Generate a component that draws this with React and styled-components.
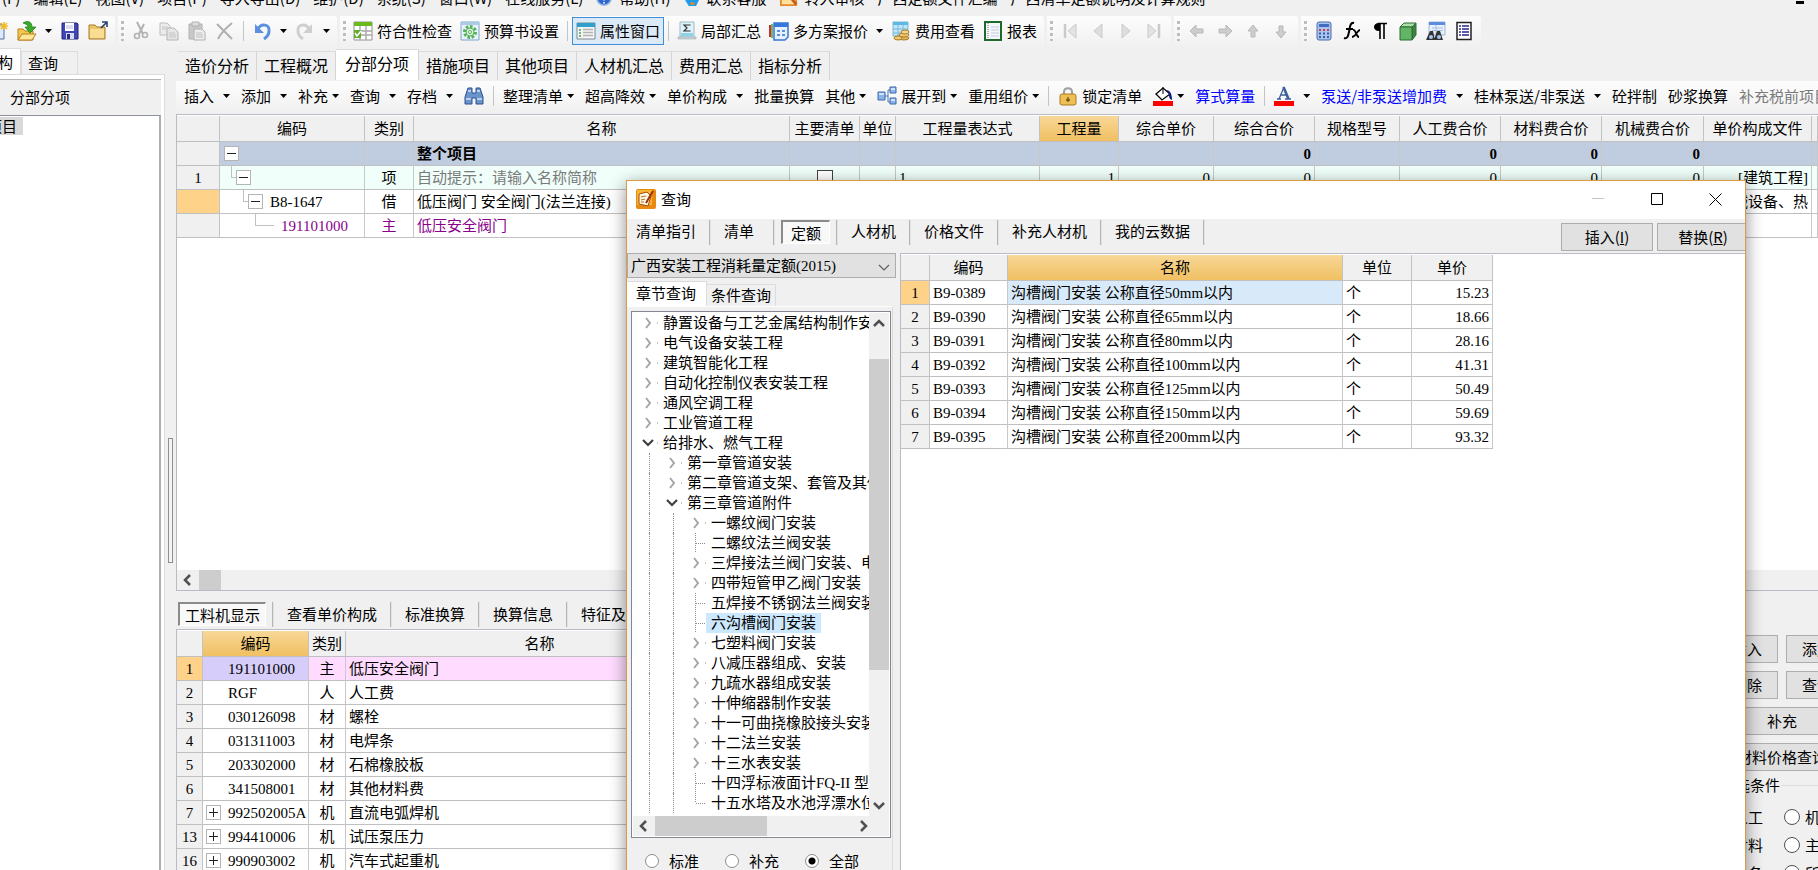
import React, { useState } from 'react';
import styled, { createGlobalStyle, css } from 'styled-components';

const GlobalStyle = createGlobalStyle`
  * {
    box-sizing: border-box;
  }

  body {
    margin: 0;
    overflow: hidden;
    background: #f0f0f0;
    color: #000;
    font-family: 'Noto Sans CJK SC', sans-serif;
    font-size: 15px;
    line-height: 20px;
  }

  button, select, input {
    font: inherit;
    color: inherit;
    margin: 0;
    padding: 0;
    border: 0;
    background: none;
    white-space: nowrap;
  }

  a {
    color: inherit;
    text-decoration: none;
  }
`;

const gridFont = css`
  font-family: 'Liberation Serif', 'Noto Sans CJK SC', serif;
`;

const Window = styled.div`
  position: relative;
  height: 100vh;
  display: flex;
  flex-direction: column;
  overflow: hidden;
`;

const MenuBar = styled.nav`
  display: flex;
  flex: none;
  align-items: flex-end;
  gap: 13px;
  height: 16px;
  padding-bottom: 8px;
  margin-left: -28px;
  white-space: nowrap;
`;

const MenuLink = styled.a`
  display: flex;
  align-items: center;
  gap: 7px;
`;

const MinimizeChild = styled.button`
  width: 8px;
  height: 3px;
  margin: 0 14px 4px auto;
  background: #000;
`;

const ToolBars = styled.div`
  display: flex;
  flex: none;
  gap: 3px;
  height: 32px;
  margin-left: -18px;
`;

const ToolGroup = styled.div`
  display: flex;
  align-items: center;
  padding: 0 3px 2px;
  background: linear-gradient(#fdfdfd, #f0f0f0);
  border-radius: 0 3px 3px 0;
`;

const Grip = styled.span`
  width: 4px;
  height: 20px;
  margin-right: 2px;
  background: repeating-linear-gradient(#bdbdbd 0 3px, transparent 3px 6px);
  border-right: 1px solid #fbfbfb;
`;

const Separator = styled.span`
  flex: none;
  width: 1px;
  height: 20px;
  margin: 0 4px;
  background: #c4c4c4;
`;

const IconButton = styled.button`
  display: flex;
  align-items: center;
  justify-content: center;
  width: 28px;
  height: 28px;
`;

const DropButton = styled.button`
  display: flex;
  align-items: center;
  justify-content: center;
  width: 15px;
  height: 28px;
`;

const LabelButton = styled.button`
  display: flex;
  align-items: center;
  gap: 4px;
  height: 28px;
  padding: 0 3px;
  border: 1px solid ${({ $on }) => ($on ? '#3c8fd9' : 'transparent')};
  background: ${({ $on }) => ($on ? '#dceaf7' : 'transparent')};
`;

const Workspace = styled.div`
  display: flex;
  flex: 1;
  min-height: 0;
`;

const LeftPane = styled.aside`
  display: flex;
  flex: 0 0 220px;
  flex-direction: column;
  margin-left: -55px;
`;

const LeftTabs = styled.div`
  display: flex;
  align-items: flex-end;
  height: 26px;
`;

const LeftTab = styled.button`
  height: ${({ $on }) => ($on ? 26 : 23)}px;
  padding: ${({ $on }) => ($on ? '0 7px' : '0 19px 0 6px')};
  background: ${({ $on }) => ($on ? '#fff' : '#f0f0f0')};
  border: 1px solid #dcdcdc;
  border-bottom: 0;
`;

const LeftPage = styled.div`
  display: flex;
  flex: 1;
  flex-direction: column;
  padding: 4px 3px 0 0;
  background: #fff;
  border-top: 1px solid #dcdcdc;
  border-right: 1px solid #dcdcdc;
`;

const LeftHeading = styled.div`
  height: 36px;
  padding: 7px 0 0 65px;
  background: #f0f0f0;
  border-top: 1px solid #b4b4b4;
`;

const ProjectTree = styled.div`
  flex: 1;
  padding-left: 8px;
  border-top: 1px solid #8c919c;
  border-right: 2px solid #a9afb9;
`;

const ProjectNode = styled.button`
  height: 18px;
  padding: 0 6px 0 4px;
  margin-top: 1px;
  line-height: 18px;
  background: #d9d9d9;
`;

const Divider = styled.div`
  display: flex;
  flex: 0 0 11px;
  justify-content: center;
  align-items: center;
`;

const DividerHandle = styled.span`
  width: 5px;
  height: 125px;
  margin-top: 82px;
  background: #f4f4f4;
  border: 1px solid #8f8f8f;
`;

const Main = styled.main`
  display: flex;
  flex: 1;
  flex-direction: column;
  min-width: 0;
`;

const MainTabs = styled.div`
  display: flex;
  align-items: flex-end;
  height: 33px;
  padding: 0 0 1px 2px;
`;

const MainTab = styled.button`
  height: ${({ $on }) => ($on ? 31 : 29)}px;
  padding: ${({ $on }) => ($on ? '0 9px 5px' : '0 7px 2px')};
  font-size: 16px;
  background: ${({ $on }) => ($on ? '#fff' : '#f0f0f0')};
  border-top: 1px solid #dcdcdc;
  border-right: 1px solid #d4d4d4;
`;

const ActionBar = styled.div`
  display: flex;
  flex: none;
  align-items: center;
  gap: 11px;
  height: 32px;
  padding: 0 0 2px 8px;
  margin-bottom: 1px;
  overflow: hidden;
  background: linear-gradient(#fdfdfd, #f0f0f0);

  ${Separator} {
    margin: 0 -2px;
  }
`;

const Action = styled.button`
  display: flex;
  flex: none;
  align-items: center;
  gap: 4px;
  color: ${({ $color }) => $color || '#000'};
`;

const Caret = styled.span`
  width: 7px;
  height: 4px;
  margin-left: ${({ $wide }) => ($wide ? 5 : 0)}px;
  background: #000;
  clip-path: polygon(0 0, 100% 0, 50% 100%);
`;

const GridFrame = styled.section`
  display: flex;
  flex: 1;
  flex-direction: column;
  min-width: 0;
  min-height: 0;
  overflow: hidden;
  background: #fff;
  border: 1px solid #b9bbc6;
  border-width: ${({ $open }) => ($open ? '1px 0 0 1px' : '1px 0 1px 1px')};
  padding-top: 1px;
`;

const Grid = styled.table`
  ${gridFont}
  width: ${({ $width }) => $width || '100%'};
  table-layout: fixed;
  border-collapse: separate;
  border-spacing: 0;
`;

const Th = styled.th`
  height: 26px;
  padding: 0;
  font-weight: 400;
  white-space: nowrap;
  overflow: hidden;
  background: ${({ $hot }) => ($hot ? 'linear-gradient(#f8d797, #f0c062)' : '#f0f0f0')};
  border-right: 1px solid #c3c3c3;
  border-bottom: 1px solid #c0c0c0;
`;

const Td = styled.td`
  height: 24px;
  padding: 0 3px;
  text-align: ${({ $align }) => $align || 'left'};
  white-space: nowrap;
  overflow: hidden;
  background: ${({ $bg }) => $bg || 'transparent'};
  color: ${({ $color }) => $color || 'inherit'};
  border-right: 1px solid #c8c8c8;
  border-bottom: 1px solid #c0c0c0;
`;

const RowHead = styled(Th)`
  height: 24px;
  background: ${({ $current }) => ($current ? '#ffd28a' : '#f0f0f0')};
`;

const Tr = styled.tr`
  background: ${({ $bg }) => $bg || '#fff'};
  color: ${({ $color }) => $color || '#000'};
  font-weight: ${({ $bold }) => ($bold ? 700 : 400)};
`;

const CodeCell = styled.div`
  display: flex;
  align-items: center;
  height: 23px;
  padding-left: ${({ $indent }) => $indent}px;
`;

const Connector = styled.span`
  flex: none;
  align-self: flex-start;
  width: ${({ $leaf }) => ($leaf ? 19 : 5)}px;
  height: 12px;
  border: 1px solid #c0c0c0;
  border-width: 0 0 1px 1px;
`;

const Toggle = styled.button`
  display: flex;
  flex: none;
  align-items: center;
  justify-content: center;
  width: 15px;
  height: 15px;
  background: #fff;
  border: 1px solid #b4b4b4;
`;

const ToggleSlot = styled.span`
  flex: none;
  width: 15px;
  height: 15px;
`;

const CodeText = styled.span`
  padding-left: 7px;
`;

const ListTick = styled.input`
  display: block;
  appearance: none;
  width: 16px;
  height: 16px;
  margin: 0 auto;
  background: #fff;
  border: 1px solid #404040;
`;

const ScrollTrack = styled.div`
  display: flex;
  flex: none;
  align-items: center;
  flex-direction: ${({ $vertical }) => ($vertical ? 'column' : 'row')};
  ${({ $vertical }) => ($vertical ? 'width: 20px;' : 'height: 20px;')}
  background: #f0f0f0;
`;

const ScrollButton = styled.button`
  display: flex;
  flex: none;
  align-items: center;
  justify-content: center;
  width: 22px;
  height: 22px;
`;

const ScrollThumb = styled.span`
  flex: ${({ $size }) => $size};
  align-self: stretch;
  background: #cdcdcd;
`;

const ScrollSpace = styled.span`
  flex: ${({ $size }) => $size};
`;

const BottomArea = styled.div`
  display: flex;
  flex: 0 0 279px;
  gap: 6px;
  min-height: 0;
`;

const DetailPane = styled.div`
  display: flex;
  flex: 1;
  flex-direction: column;
  min-width: 0;
`;

const SegmentTabs = styled.div`
  display: flex;
  align-items: center;
  height: 26px;
`;

const DetailTabs = styled(SegmentTabs)`
  flex: none;
  margin: 10px 0 2px 2px;
`;

const SegmentTab = styled.button`
  height: 26px;
  padding: 0 13px;
`;

const SegmentTabOn = styled.button`
  height: 24px;
  padding: 0 5px;
  background: #f8f8f8;
  border: 1px solid #fff;
  border-top: 2px solid #8a8a8a;
  border-left: 2px solid #8a8a8a;
`;

const DialogTabOn = styled(SegmentTabOn)`
  padding: 0 8px;
  margin-left: 6px;
`;

const SegmentLine = styled.span`
  width: 2px;
  height: 25px;
  margin-left: ${({ $gap }) => $gap || 0}px;
  background: #b4b4b4;
  border-right: 1px solid #e2e2e2;
`;

const SidePanel = styled.div`
  flex: none;
  width: 136px;
  margin-right: -30px;
  padding-top: 44px;
`;

const ButtonGrid = styled.div`
  display: grid;
  grid-template-columns: 1fr 1fr;
  gap: 8px;
  padding: 0 0 0 4px;
`;

const PushButton = styled.button`
  height: 28px;
  grid-column: ${({ $full }) => ($full ? '1 / -1' : 'auto')};
  background: #e1e1e1;
  border: 1px solid #adadad;
`;

const FilterBox = styled.fieldset`
  display: grid;
  grid-template-columns: 72px 64px;
  row-gap: 8px;
  margin: 4px 0 0;
  padding: 12px 0 0;
  border: 1px solid #dcdcdc;
  border-left: 0;

  legend {
    margin-left: 6px;
    padding: 0 2px;
  }
`;

const RadioLabel = styled.label`
  display: flex;
  align-items: center;
  gap: 5px;
  white-space: nowrap;
`;

const Radio = styled.input`
  appearance: none;
  width: 16px;
  height: 16px;
  background: #fff;
  border: 1px solid #505050;
  border-radius: 50%;

  &:checked {
    background: radial-gradient(#000 0 3px, #fff 4px);
  }
`;

const Dialog = styled.div`
  position: absolute;
  top: 180px;
  right: 72px;
  bottom: 0;
  left: 626px;
  display: flex;
  flex-direction: column;
  overflow: hidden;
  background: #f0f0f0;
  border: 1px solid #dc9a45;
  border-bottom: 0;
`;

const DialogShadow = styled.div`
  position: absolute;
  top: 180px;
  right: 72px;
  bottom: -20px;
  left: 626px;
  box-shadow: 0 4px 16px rgba(0, 0, 0, 0.45);
`;

const TitleBar = styled.header`
  display: flex;
  flex: none;
  align-items: center;
  gap: 5px;
  height: 38px;
  padding: 0 0 2px 9px;
  background: #fff;
`;

const WindowButtons = styled.div`
  display: flex;
  margin-left: auto;
`;

const WindowButton = styled.button`
  display: flex;
  align-items: center;
  justify-content: center;
  width: 59px;
  height: 36px;
`;

const DialogBar = styled.div`
  display: flex;
  flex: none;
  justify-content: space-between;
  align-items: flex-start;
  height: 34px;

  ${SegmentTab} {
    padding-bottom: 2px;
  }

  ${SegmentTab}:first-child {
    padding-left: 9px;
  }
`;

const DialogActions = styled.div`
  display: flex;
  gap: 4px;
  margin: 4px -4px 0 0;

  ${PushButton} {
    width: 92px;
  }
`;

const DialogBody = styled.div`
  display: flex;
  flex: 1;
  gap: 4px;
  min-height: 0;
`;

const QueryPane = styled.div`
  display: flex;
  flex: 0 0 269px;
  flex-direction: column;
  min-width: 0;
`;

const SelectBox = styled.div`
  position: relative;
  height: 25px;

  svg {
    position: absolute;
    top: 8px;
    right: 6px;
    pointer-events: none;
  }
`;

const LibrarySelect = styled.select`
  ${gridFont}
  appearance: none;
  width: 100%;
  height: 25px;
  padding-left: 3px;
  background: #e1e1e1;
  border: 1px solid #adadad;
`;

const QueryTabs = styled.div`
  display: flex;
  align-items: flex-end;
  height: 28px;
`;

const QueryTab = styled.button`
  height: ${({ $on }) => ($on ? 25 : 22)}px;
  padding: ${({ $on }) => ($on ? '0 10px 2px 9px' : '0 4px 2px')};
  background: ${({ $on }) => ($on ? '#fff' : '#f0f0f0')};
  border: 1px solid #dcdcdc;
  border-bottom: 0;
  border-left: 0;
`;

const QueryPage = styled.div`
  display: flex;
  flex: 1;
  flex-direction: column;
  min-height: 0;
  margin-right: 3px;
  padding: 4px 1px 0 4px;
  border-top: 1px solid #fff;
  border-right: 1px solid #dcdcdc;
`;

const TreeFrame = styled.div`
  display: flex;
  flex: 1;
  flex-direction: column;
  min-height: 0;
  padding: 1px;
  background: #fff;
  border: 1px solid #828790;
`;

const TreeScroll = styled.div`
  display: flex;
  flex: 1;
  min-height: 0;
`;

const Tree = styled.ul`
  ${gridFont}
  flex: 1;
  min-width: 0;
  margin: 0;
  padding: 0 0 0 6px;
  overflow: hidden;
  list-style: none;
`;

const TreeRow = styled.li`
  display: flex;
  height: 20px;
  white-space: nowrap;
`;

const Guide = styled.span`
  flex: none;
  width: 14px;
  margin-left: 10px;
  border-left: 1px dotted #8c8c8c;
`;

const TreeLabel = styled.button`
  flex: none;
  padding: 0 5px;
  background: ${({ $selected }) => ($selected ? '#cce8ff' : 'transparent')};
`;

const TreeIcon = styled.svg`
  flex: none;
  width: 19px;
  height: 20px;
`;

const RadioRow = styled.div`
  display: flex;
  flex: none;
  height: 32px;
  padding: 14px 0 0 14px;

  ${RadioLabel} {
    width: 80px;
    gap: 10px;
  }

  ${Radio} {
    width: 14px;
    height: 14px;
    border-color: #8c8c8c;
  }
`;

const Svg = ({ size = 20, h, children }) => (
  <svg width={size} height={h || size} viewBox={`0 0 20 ${h ? (20 * h) / size : 20}`} fill="none" aria-hidden="true">
    {children}
  </svg>
);

const icons = {
  newDoc: (
    <Svg>
      <path d="M3 3h9l3 3v12H3z" fill="#dce9fb" stroke="#4f6da8" />
      <path d="M15 1v8M11 5h8M12 2l6 6M18 2l-6 6" stroke="#f2bd28" strokeWidth="1.5" />
    </Svg>
  ),
  open: (
    <Svg>
      <path d="M1 19V8h5l2 2h8v9z" fill="#f4c84c" stroke="#b5801a" />
      <path d="M1 19l4-6h14l-4 6z" fill="#ffe69a" stroke="#b5801a" />
      <path d="M6 2c5-3 9-1 9 4h4l-6 6-5-6h3c0-2-2-3-5-4z" fill="#3bab2c" stroke="#1d7a18" strokeWidth=".7" />
    </Svg>
  ),
  save: (
    <Svg>
      <path d="M2 2h15l1 1v15H2z" fill="#4146b5" stroke="#22257c" />
      <path d="M5 2h9v8H5z" fill="#fff" />
      <path d="M6 5h7M6 7h7" stroke="#b6b9de" />
      <path d="M6 12h8v6H6z" fill="#d8daf2" />
      <path d="M7 13h3v5H7z" fill="#2a2d88" />
    </Svg>
  ),
  folderUp: (
    <Svg>
      <path d="M1 18V4h6l2 2h8v12z" fill="#edc566" stroke="#a9782a" />
      <path d="M2 8h14v9H2z" fill="#f9dd93" />
      <path d="M13 7l5-5M14 1h5v5" stroke="#25406e" strokeWidth="1.600" />
    </Svg>
  ),
  cut: (
    <Svg>
      <path d="M6 1l6 12M13 3L8 13" stroke="#b2b2b2" strokeWidth="2" />
      <circle cx="6" cy="15" r="2.500" stroke="#b2b2b2" strokeWidth="1.600" />
      <circle cx="14" cy="14" r="2.500" stroke="#b2b2b2" strokeWidth="1.600" />
    </Svg>
  ),
  copy: (
    <Svg>
      <path d="M1 2h7l3 3v9H1z" fill="#ececec" stroke="#bcbcbc" />
      <path d="M8 7h7l4 4v8H8z" fill="#e6e6e6" stroke="#b4b4b4" />
      <path d="M3 6h5M3 8h4M10 12h6M10 14h7M10 16h7" stroke="#c4c4c4" />
    </Svg>
  ),
  paste: (
    <Svg>
      <path d="M2 3h13v15H2z" fill="#c9c9c9" stroke="#b0b0b0" />
      <path d="M5 1h7v4H5z" fill="#dedede" stroke="#b0b0b0" />
      <path d="M7 8h8l3 3v8H7z" fill="#ededed" stroke="#b0b0b0" />
      <path d="M9 12h6M9 14h7M9 16h7" stroke="#c0c0c0" />
    </Svg>
  ),
  remove: (
    <Svg>
      <path d="M2 3l15 15M17 2C11 7 6 12 3 18" stroke="#b0b0b0" strokeWidth="2" />
    </Svg>
  ),
  undo: (
    <Svg>
      <path d="M3 3v9h9z" fill="#5b8fe0" />
      <path d="M6 8c3-6 12-5 11 2 0 4-2 6-5 8" stroke="#5b8fe0" strokeWidth="3" />
    </Svg>
  ),
  redo: (
    <Svg>
      <path d="M17 3v9H8z" fill="#cfcfcf" />
      <path d="M14 8C11 2 2 3 3 10c0 4 2 6 5 8" stroke="#cfcfcf" strokeWidth="3" />
    </Svg>
  ),
  check: (
    <Svg>
      <path d="M1 1h18v18H1z" fill="#fff" stroke="#909090" />
      <path d="M1 1h18v4H1z" fill="#6cb91c" />
      <path d="M7 5v14M13 5v14M1 10h18M1 14h18" stroke="#a8a8a8" strokeWidth="1.400" />
      <path d="M1 9h7v8H1z" fill="#62ad2c" />
      <path d="M2 12l2 3 4-5" stroke="#fff" strokeWidth="1.500" />
    </Svg>
  ),
  gear: (
    <Svg>
      <path d="M1 1h18v18H1z" fill="#eaf3fb" stroke="#7fa6cc" />
      <path d="M1 1h18v3H1z" fill="#aecbe6" />
      <circle cx="10" cy="11" r="5.500" stroke="#57b05a" strokeWidth="3" strokeDasharray="2.6 1.6" />
      <circle cx="10" cy="11" r="4" fill="#d9f1d7" stroke="#57b05a" />
      <circle cx="10" cy="11" r="1.500" fill="#fff" stroke="#57b05a" />
    </Svg>
  ),
  props: (
    <Svg>
      <path d="M1 2h18v16H1z" fill="#f5f5f5" stroke="#7c8a94" />
      <path d="M1 2h18v4H1z" fill="#2fa0cb" />
      <path d="M4 8v9" stroke="#68b878" strokeWidth="2" strokeDasharray="2 1" />
      <path d="M7 8.500h10M7 11.500h10M7 14.500h10" stroke="#b3b3b3" strokeWidth="1.500" />
    </Svg>
  ),
  sigma: (
    <Svg>
      <path d="M3 1h14v15H3z" fill="#dff3fa" stroke="#9db9c4" />
      <path d="M13 4.500V4H7l3 3-3 3h6v-.5" stroke="#333" strokeWidth="1.200" />
      <path d="M4 12h12v3H4z" fill="#8ed2e8" />
      <path d="M1 16h18v2H1z" fill="#c9d5d9" stroke="#90a0a8" strokeWidth=".5" />
    </Svg>
  ),
  plans: (
    <Svg>
      <path d="M1 4v12" stroke="#d92b2b" strokeWidth="2" />
      <path d="M3 3v14" stroke="#39a839" strokeWidth="1.500" />
      <path d="M5 2h14v14l-3 3H5z" fill="#e7f0ff" stroke="#3777d8" strokeWidth="1.500" />
      <path d="M5 2h14v4H5z" fill="#3777d8" />
      <path d="M8 10h3M13 10h3M8 14h3M13 14h3" stroke="#5b8fe0" strokeWidth="2" />
    </Svg>
  ),
  coins: (
    <Svg>
      <path d="M2 1h15v14H2z" fill="#bfe5f7" stroke="#7ab8d8" />
      <path d="M2 1h15v3H2z" fill="#5db9e4" />
      <path d="M7 4v11M12 4v11M2 8h15M2 12h15" stroke="#7ab8d8" />
      <ellipse cx="13" cy="17" rx="5" ry="2" fill="#e2b357" stroke="#a87b28" />
      <ellipse cx="13" cy="14" rx="5" ry="2" fill="#efc871" stroke="#a87b28" />
      <ellipse cx="7" cy="17" rx="4" ry="2" fill="#efc871" stroke="#a87b28" />
      <ellipse cx="14" cy="11" rx="4" ry="2" fill="#f5d88e" stroke="#a87b28" />
    </Svg>
  ),
  report: (
    <Svg>
      <path d="M2 1h16v18H2z" fill="#f4f7fb" stroke="#1f6a2b" strokeWidth="2" />
      <path d="M5 2v16" stroke="#777" strokeDasharray="1 1" />
      <path d="M8 6h8M8 9h8M8 12h8M8 15h8" stroke="#c3cbd8" />
    </Svg>
  ),
  first: (
    <Svg>
      <path d="M5 3v14" stroke="#cacaca" strokeWidth="2.500" />
      <path d="M16 3v14l-8-7z" fill="#e3e3e3" stroke="#cacaca" />
    </Svg>
  ),
  prev: (
    <Svg>
      <path d="M14 3v14l-8-7z" fill="#dedede" stroke="#cacaca" />
    </Svg>
  ),
  next: (
    <Svg>
      <path d="M6 3v14l8-7z" fill="#dedede" stroke="#cacaca" />
    </Svg>
  ),
  last: (
    <Svg>
      <path d="M15 3v14" stroke="#cacaca" strokeWidth="2.500" />
      <path d="M4 3v14l8-7z" fill="#e3e3e3" stroke="#cacaca" />
    </Svg>
  ),
  left: (
    <Svg>
      <path d="M3 10l6-6v4h7v4H9v4z" fill="#cdcdcd" stroke="#b9b9b9" />
    </Svg>
  ),
  right: (
    <Svg>
      <path d="M17 10l-6-6v4H4v4h7v4z" fill="#cdcdcd" stroke="#b9b9b9" />
    </Svg>
  ),
  up: (
    <Svg>
      <path d="M10 4l5 6h-3v6H8v-6H5z" fill="#cdcdcd" stroke="#b9b9b9" />
    </Svg>
  ),
  down: (
    <Svg>
      <path d="M10 17l5-6h-3V5H8v6H5z" fill="#cdcdcd" stroke="#b9b9b9" />
    </Svg>
  ),
  calc: (
    <Svg>
      <rect x="3" y="1" width="14" height="18" rx="2" fill="#a9c4ee" stroke="#4c6ca8" />
      <path d="M5 3h10v3H5z" fill="#3f6cc0" />
      <path d="M5 9h10" stroke="#c8404f" strokeWidth="2" strokeDasharray="2 2" />
      <path d="M5 12.500h10M5 16h10" stroke="#3c5ea8" strokeWidth="2" strokeDasharray="2 2" />
    </Svg>
  ),
  fx: (
    <Svg>
      <path d="M12 2C8 1 8 6 7 11s-2 7-5 6M4 8h7" stroke="#000" strokeWidth="2" />
      <path d="M11 9c3-1 3 7 6 7M18 9c-3 0-4 7-8 7" stroke="#000" strokeWidth="1.800" />
    </Svg>
  ),
  para: (
    <Svg>
      <path d="M10 2v16M14 2v16M8 2.500h9" stroke="#000" strokeWidth="1.600" />
      <path d="M10 2C2 1 2 11 10 10z" fill="#000" />
    </Svg>
  ),
  cube: (
    <Svg>
      <path d="M2 6l4-4h12l-4 4z" fill="#aadfa5" stroke="#2f6b33" />
      <path d="M14 6l4-4v12l-4 5z" fill="#3c8640" stroke="#2f6b33" />
      <path d="M2 6h12v13H2z" fill="#63b566" stroke="#2f6b33" />
    </Svg>
  ),
  find: (
    <Svg>
      <path d="M3 1h16v13H3z" fill="#e8f0fc" stroke="#9fb6dd" />
      <path d="M3 1h16v3H3z" fill="#5d8ede" />
      <path d="M6 7h11M6 9.500h11M10 4v9" stroke="#a9bfe5" />
      <path d="M4 10h3l2 9H0zM11 10h3l3 9H8z" fill="#333" />
      <circle cx="5" cy="16" r="2" fill="#a7c8f5" />
      <circle cx="13" cy="16" r="2" fill="#a7c8f5" />
    </Svg>
  ),
  list: (
    <Svg>
      <path d="M3 1.500h14v17H3z" fill="#fff" stroke="#222" strokeWidth="1.500" />
      <path d="M5 5h2M5 8h2M5 11h2M5 14h2M8 5h7M8 8h7M8 11h7M8 14h7" stroke="#2a2a8c" strokeWidth="1.500" />
    </Svg>
  ),
  binoculars: (
    <Svg>
      <path d="M4 2h4v5h4V2h4l3 9v7h-7v-6H8v6H1v-7z" fill="#6c94cc" stroke="#2c5191" />
      <path d="M4 5h3M13 5h3M2 13h5M13 13h5" stroke="#d4e3f8" strokeWidth="1.500" />
    </Svg>
  ),
  expand: (
    <Svg>
      <path d="M7 10h4M11 10V4h3M11 10v6h3" stroke="#4a76b8" />
      <path d="M1 6h7v8H1zM13 1h6v6h-6zM13 12h6v6h-6z" fill="#8db4ea" stroke="#3c68ab" />
      <path d="M2 8h5M14 3h4M14 14h4" stroke="#e5effc" strokeWidth="1.500" />
    </Svg>
  ),
  lock: (
    <Svg>
      <path d="M6 9V6c0-5 8-5 8 0v3" stroke="#9f9f9f" strokeWidth="2" />
      <rect x="2" y="8" width="16" height="11" rx="2" fill="#eebf55" stroke="#a97b25" />
      <path d="M10 11v5M8 14h4" stroke="#6e4e12" strokeWidth="1.300" />
    </Svg>
  ),
  paint: (
    <Svg>
      <path d="M3 8l7-6 7 6-8 6z" fill="#fff" stroke="#000" strokeWidth="1.300" />
      <path d="M10 8V1" stroke="#000" />
      <path d="M13 4c4 0 6 4 6 10-3-1-3-4-3-6z" fill="#101a80" />
      <path d="M0 15h20v5H0z" fill="#f00" />
    </Svg>
  ),
  fontColor: (
    <Svg>
      <path d="M5 13L10 1M7 9h6M3 13h4M11 13h6" stroke="#3c5f9a" strokeWidth="1.300" />
      <path d="M9.500 1l5 12" stroke="#3c5f9a" strokeWidth="2.600" />
      <path d="M0 15h20v5H0z" fill="#f00" />
    </Svg>
  ),
  help: (
    <Svg size={16}>
      <circle cx="10" cy="10" r="9" fill="#2f66c9" stroke="#9dbbe9" strokeWidth="2" />
      <path d="M7 8c0-4 6-4 6 0 0 2-3 2-3 5M10 15v2" stroke="#fff" strokeWidth="2" />
    </Svg>
  ),
  service: (
    <Svg size={16}>
      <path d="M3 1h14l2 11-4 8H6l-5-8z" fill="#1d9bea" />
      <path d="M8 17h5" stroke="#e9892a" strokeWidth="3" />
    </Svg>
  ),
  audit: (
    <Svg size={18}>
      <path d="M1 1h17v17H1z" fill="#ffe09a" stroke="#e58a2c" strokeWidth="2" />
      <path d="M8 5l10 12" stroke="#c75a1b" strokeWidth="3" />
    </Svg>
  ),
  app: (
    <Svg>
      <rect x="0" y="0" width="20" height="20" rx="2" fill="#e88a12" />
      <path d="M1 1h15v15H1z" fill="#f7b631" />
      <path d="M3 5l8-2 4 4-3 10-9-2z" fill="#fff8e0" stroke="#a3480c" />
      <path d="M5 8l5-1M5 11l4-1M5 13l3 0" stroke="#b96a2c" />
      <path d="M17 2l-7 12" stroke="#a3300c" strokeWidth="2" />
    </Svg>
  ),
};

const Chevron = ({ dir, color = '#505050', width = 2.5 }) => {
  const shapes = {
    left: 'M8 1L3 6l5 5',
    right: 'M4 1l5 5-5 5',
    up: 'M1 8l5-5 5 5',
    down: 'M1 4l5 5 5-5',
  };
  return (
    <svg width="12" height="12" viewBox="0 0 12 12" fill="none" aria-hidden="true">
      <path d={shapes[dir]} stroke={color} strokeWidth={width} />
    </svg>
  );
};

const PlusMinus = ({ open }) => (
  <Toggle aria-label={open ? '折叠' : '展开'}>
    <svg width="11" height="11" viewBox="0 0 11 11" aria-hidden="true">
      <path d={open ? 'M1 5.500h9' : 'M1 5.500h9M5.500 1v9'} stroke="#222" />
    </svg>
  </Toggle>
);

// Arrow, or the dotted elbow of a leaf, in front of a tree label
const TreeMark = ({ kind }) => (
  <TreeIcon viewBox="0 0 19 20" fill="none" aria-hidden="true">
    {kind === 'closed' && <path d="M7 5l4 5-4 5" stroke="#a6a6a6" strokeWidth="2" />}
    {kind === 'open' && <path d="M4 7l5 5 5-5" stroke="#404040" strokeWidth="2.200" />}
    {(kind === 'leaf' || kind === 'last') && (
      <path d={kind === 'leaf' ? 'M8.500 0v20M9 10.500h10' : 'M8.500 0v10M9 10.500h10'} stroke="#8c8c8c" strokeDasharray="1 1" />
    )}
    {(kind === 'closed' || kind === 'open') && <path d="M18 10h1" stroke="#8c8c8c" />}
  </TreeIcon>
);

const menus = ['文件(F)', '编辑(E)', '视图(V)', '项目(P)', '导入导出(D)', '维护(D)', '系统(S)', '窗口(W)', '在线服务(L)'];

const actions = [
  { text: '插入', drop: 'wide' },
  { text: '添加', drop: 'wide' },
  { text: '补充', drop: 'tight' },
  { text: '查询', drop: 'wide' },
  { text: '存档', drop: 'wide' },
  { icon: 'binoculars', name: '查找' },
  { sep: true },
  { text: '整理清单', drop: 'tight' },
  { text: '超高降效', drop: 'tight' },
  { text: '单价构成', drop: 'wide' },
  { text: '批量换算' },
  { text: '其他', drop: 'tight' },
  { icon: 'expand', text: '展开到', drop: 'tight' },
  { text: '重用组价', drop: 'tight' },
  { sep: true },
  { icon: 'lock', text: '锁定清单' },
  { icon: 'paint', name: '填充颜色', drop: 'tight' },
  { text: '算式算量', color: '#0000ff' },
  { sep: true },
  { icon: 'fontColor', name: '字体颜色', drop: 'wide' },
  { text: '泵送/非泵送增加费', color: '#0000ff', drop: 'wide' },
  { text: '桂林泵送/非泵送', drop: 'wide' },
  { text: '砼拌制' },
  { text: '砂浆换算' },
  { text: '补充税前项目', color: '#7a7a7a' },
];

const mainTabs = ['造价分析', '工程概况', '分部分项', '措施项目', '其他项目', '人材机汇总', '费用汇总', '指标分析'];

const itemColumns = [
  ['', 43],
  ['编码', 145],
  ['类别', 49],
  ['名称', 376],
  ['主要清单', 70],
  ['单位', 36],
  ['工程量表达式', 144],
  ['工程量', 79],
  ['综合单价', 95],
  ['综合合价', 101],
  ['规格型号', 85],
  ['人工费合价', 101],
  ['材料费合价', 101],
  ['机械费合价', 102],
  ['单价构成文件', 108],
  ['', null],
];

// values: unit, expression, quantity, unit price, total, model, labour, material, machine, file
const items = [
  { kind: '', name: '整个项目', level: 0, bg: '#c0ccdf', bold: true, values: ['', '', '', '', '0', '', '0', '0', '0', ''] },
  { no: '1', kind: '项', name: '自动提示：请输入名称简称', level: 1, bg: '#f0fffa', hint: true, tick: true, values: ['', '1', '1', '0', '0', '', '0', '0', '0', '[建筑工程]'] },
  { code: 'B8-1647', kind: '借', name: '低压阀门 安全阀门(法兰连接)', level: 2, current: true, values: ['', '', '', '', '', '', '', '', '', '械设备、热'] },
  { code: '191101000', kind: '主', name: '低压安全阀门', level: 3, leaf: true, color: '#8b008b', values: ['', '', '', '', '', '', '', '', '', ''] },
];

const resources = [
  ['1', '191101000', '主', '低压安全阀门'],
  ['2', 'RGF', '人', '人工费'],
  ['3', '030126098', '材', '螺栓'],
  ['4', '031311003', '材', '电焊条'],
  ['5', '203302000', '材', '石棉橡胶板'],
  ['6', '341508001', '材', '其他材料费'],
  ['7', '992502005A', '机', '直流电弧焊机'],
  ['13', '994410006', '机', '试压泵压力'],
  ['16', '990903002', '机', '汽车式起重机'],
];

const quotas = [
  ['B9-0389', '50', '15.23'],
  ['B9-0390', '65', '18.66'],
  ['B9-0391', '80', '28.16'],
  ['B9-0392', '100', '41.31'],
  ['B9-0393', '125', '50.49'],
  ['B9-0394', '150', '59.69'],
  ['B9-0395', '200', '93.32'],
];

const chapters = [
  [0, 'closed', '静置设备与工艺金属结构制作安装工程'],
  [0, 'closed', '电气设备安装工程'],
  [0, 'closed', '建筑智能化工程'],
  [0, 'closed', '自动化控制仪表安装工程'],
  [0, 'closed', '通风空调工程'],
  [0, 'closed', '工业管道工程'],
  [0, 'open', '给排水、燃气工程'],
  [1, 'closed', '第一章管道安装'],
  [1, 'closed', '第二章管道支架、套管及其他'],
  [1, 'open', '第三章管道附件'],
  [2, 'closed', '一螺纹阀门安装'],
  [2, 'leaf', '二螺纹法兰阀安装'],
  [2, 'closed', '三焊接法兰阀门安装、电动阀'],
  [2, 'closed', '四带短管甲乙阀门安装'],
  [2, 'leaf', '五焊接不锈钢法兰阀安装'],
  [2, 'leaf', '六沟槽阀门安装'],
  [2, 'closed', '七塑料阀门安装'],
  [2, 'closed', '八减压器组成、安装'],
  [2, 'closed', '九疏水器组成安装'],
  [2, 'closed', '十伸缩器制作安装'],
  [2, 'closed', '十一可曲挠橡胶接头安装'],
  [2, 'closed', '十二法兰安装'],
  [2, 'closed', '十三水表安装'],
  [2, 'leaf', '十四浮标液面计FQ-II 型'],
  [2, 'last', '十五水塔及水池浮漂水位标尺'],
];

const Columns = ({ widths }) => (
  <colgroup>
    {widths.map((width, i) => (
      <col key={i} style={width ? { width } : undefined} />
    ))}
  </colgroup>
);

const Tool = ({ icon, name }) => <IconButton aria-label={name}>{icons[icon]}</IconButton>;

const Drop = ({ name }) => (
  <DropButton aria-label={name}>
    <Caret />
  </DropButton>
);

const LabelTool = ({ icon, on, children }) => (
  <LabelButton $on={on}>
    {icons[icon]}
    {children}
  </LabelButton>
);

const TopBars = () => (
  <>
    <MenuBar>
      {menus.map((menu) => (
        <MenuLink href="#" key={menu}>{menu}</MenuLink>
      ))}
      <MenuLink href="#">{icons.help}帮助(H)</MenuLink>
      <MenuLink href="#">{icons.service}联系客服</MenuLink>
      <MenuLink href="#">{icons.audit}转入审核</MenuLink>
      <MenuLink href="#">广西定额文件汇编</MenuLink>
      <MenuLink href="#">广西清单定额说明及计算规则</MenuLink>
      <MinimizeChild aria-label="最小化" />
    </MenuBar>
    <ToolBars>
      <ToolGroup>
        <Tool icon="newDoc" name="新建" />
        <Tool icon="open" name="打开" />
        <Drop name="打开选项" />
        <Tool icon="save" name="保存" />
        <Tool icon="folderUp" name="导出" />
      </ToolGroup>
      <ToolGroup>
        <Grip />
        <Tool icon="cut" name="剪切" />
        <Tool icon="copy" name="复制" />
        <Tool icon="paste" name="粘贴" />
        <Tool icon="remove" name="删除" />
        <Separator />
        <Tool icon="undo" name="撤销" />
        <Drop name="撤销列表" />
        <Tool icon="redo" name="重做" />
        <Drop name="重做列表" />
      </ToolGroup>
      <ToolGroup>
        <Grip />
        <LabelTool icon="check">符合性检查</LabelTool>
        <LabelTool icon="gear">预算书设置</LabelTool>
        <Separator />
        <LabelTool icon="props" on>属性窗口</LabelTool>
        <Separator />
        <LabelTool icon="sigma">局部汇总</LabelTool>
        <LabelTool icon="plans">多方案报价</LabelTool>
        <Drop name="报价方案" />
        <LabelTool icon="coins">费用查看</LabelTool>
        <LabelTool icon="report">报表</LabelTool>
      </ToolGroup>
      <ToolGroup>
        <Grip />
        <Tool icon="first" name="首条" />
        <Tool icon="prev" name="上一条" />
        <Tool icon="next" name="下一条" />
        <Tool icon="last" name="末条" />
      </ToolGroup>
      <ToolGroup>
        <Grip />
        <Tool icon="left" name="升级" />
        <Tool icon="right" name="降级" />
        <Tool icon="up" name="上移" />
        <Tool icon="down" name="下移" />
      </ToolGroup>
      <ToolGroup>
        <Grip />
        <Tool icon="calc" name="计算器" />
        <Tool icon="fx" name="函数" />
        <Tool icon="para" name="段落" />
        <Tool icon="cube" name="体积" />
        <Tool icon="find" name="查找" />
        <Tool icon="list" name="清单" />
      </ToolGroup>
    </ToolBars>
  </>
);

const Actions = () => (
  <ActionBar>
    {actions.map((action, i) =>
      action.sep ? (
        <Separator key={i} />
      ) : (
        <Action key={i} $color={action.color} aria-label={action.name}>
          {action.icon && icons[action.icon]}
          {action.text}
          {action.drop && <Caret $wide={action.drop === 'wide'} />}
        </Action>
      )
    )}
  </ActionBar>
);

const ItemGrid = () => (
  <Grid>
    <Columns widths={itemColumns.map(([, width]) => width)} />
    <thead>
      <tr>
        {itemColumns.map(([title], i) => (
          <Th key={i} $hot={title === '工程量'}>{title}</Th>
        ))}
      </tr>
    </thead>
    <tbody>
      {items.map((item) => (
        <Tr key={item.name} $bg={item.bg} $color={item.color} $bold={item.bold}>
          <RowHead as="td" $current={item.current} align="center">{item.no}</RowHead>
          <Td>
            <CodeCell $indent={item.level ? 12 * item.level - 4 : 1}>
              {item.level > 0 && <Connector $leaf={item.leaf} />}
              {!item.leaf && <PlusMinus open />}
              <CodeText>{item.code}</CodeText>
            </CodeCell>
          </Td>
          <Td $align="center">{item.kind}</Td>
          <Td $color={item.hint && '#7a7a7a'}>{item.name}</Td>
          <Td>{item.tick && <ListTick type="checkbox" aria-label="主要清单" />}</Td>
          {item.values.map((value, i) => (
            <Td key={i} $align={i < 2 ? 'left' : 'right'}>{value}</Td>
          ))}
          <Td />
        </Tr>
      ))}
    </tbody>
  </Grid>
);

const ResourceGrid = () => (
  <Grid>
    <Columns widths={[26, 106, 37, 388, null]} />
    <thead>
      <tr>
        <Th />
        <Th $hot>编码</Th>
        <Th>类别</Th>
        <Th>名称</Th>
        <Th />
      </tr>
    </thead>
    <tbody>
      {resources.map(([no, code, kind, name], i) => (
        <Tr key={code} $bg={i === 0 && '#ffdcff'}>
          <RowHead as="td" $current={i === 0} align="center">{no}</RowHead>
          <Td $bg={i === 0 && '#d6cdfa'}>
            <CodeCell $indent={0}>
              {i > 5 ? <PlusMinus /> : <ToggleSlot />}
              <CodeText>{code}</CodeText>
            </CodeCell>
          </Td>
          <Td $align="center">{kind}</Td>
          <Td>{name}</Td>
          <Td />
        </Tr>
      ))}
    </tbody>
  </Grid>
);

const QuotaGrid = () => (
  <Grid $width="592px">
    <Columns widths={[29, 78, 335, 69, 81]} />
    <thead>
      <tr>
        <Th />
        <Th>编码</Th>
        <Th $hot>名称</Th>
        <Th>单位</Th>
        <Th>单价</Th>
      </tr>
    </thead>
    <tbody>
      {quotas.map(([code, size, price], i) => (
        <Tr key={code}>
          <RowHead as="td" $current={i === 0} align="center">{i + 1}</RowHead>
          <Td>{code}</Td>
          <Td $bg={i === 0 && '#d8eaf9'}>沟槽阀门安装 公称直径{size}mm以内</Td>
          <Td>个</Td>
          <Td $align="right">{price}</Td>
        </Tr>
      ))}
    </tbody>
  </Grid>
);

const QueryDialog = () => {
  const [selected, setSelected] = useState('六沟槽阀门安装');

  return (
    <>
      <DialogShadow />
      <Dialog role="dialog" aria-label="查询">
        <TitleBar>
          {icons.app}
          查询
          <WindowButtons>
            <WindowButton aria-label="最小化">
              <svg width="12" height="12"><path d="M0 5.500h12" stroke="#c4c4c4" /></svg>
            </WindowButton>
            <WindowButton aria-label="最大化">
              <svg width="12" height="12" fill="none"><path d="M.5.5h11v11H.5z" stroke="#000" /></svg>
            </WindowButton>
            <WindowButton aria-label="关闭">
              <svg width="13" height="13"><path d="M.5.500l12 12M12.500.500l-12 12" stroke="#000" /></svg>
            </WindowButton>
          </WindowButtons>
        </TitleBar>
        <DialogBar>
          <SegmentTabs>
            <SegmentTab>清单指引</SegmentTab>
            <SegmentLine />
            <SegmentTab>清单</SegmentTab>
            <SegmentLine $gap={6} />
            <DialogTabOn>定额</DialogTabOn>
            <SegmentLine $gap={6} />
            <SegmentTab>人材机</SegmentTab>
            <SegmentLine />
            <SegmentTab>价格文件</SegmentTab>
            <SegmentLine />
            <SegmentTab>补充人材机</SegmentTab>
            <SegmentLine />
            <SegmentTab>我的云数据</SegmentTab>
            <SegmentLine />
          </SegmentTabs>
          <DialogActions>
            <PushButton>插入(<u>I</u>)</PushButton>
            <PushButton>替换(<u>R</u>)</PushButton>
          </DialogActions>
        </DialogBar>
        <DialogBody>
          <QueryPane>
            <SelectBox>
              <LibrarySelect aria-label="定额库" defaultValue="2015">
                <option value="2015">广西安装工程消耗量定额(2015)</option>
              </LibrarySelect>
              <Chevron dir="down" color="#606060" width={1.2} />
            </SelectBox>
            <QueryTabs>
              <QueryTab $on>章节查询</QueryTab>
              <QueryTab>条件查询</QueryTab>
            </QueryTabs>
            <QueryPage>
              <TreeFrame>
                <TreeScroll>
                  <Tree>
                    {chapters.map(([level, kind, name]) => (
                      <TreeRow key={name}>
                        {level > 0 && <Guide />}
                        {level > 1 && <Guide />}
                        <TreeMark kind={kind} />
                        <TreeLabel $selected={name === selected} onClick={() => setSelected(name)}>
                          {name}
                        </TreeLabel>
                      </TreeRow>
                    ))}
                  </Tree>
                  <ScrollTrack $vertical>
                    <ScrollButton aria-label="向上"><Chevron dir="up" /></ScrollButton>
                    <ScrollSpace $size={24} />
                    <ScrollThumb $size={311} />
                    <ScrollSpace $size={124} />
                    <ScrollButton aria-label="向下"><Chevron dir="down" /></ScrollButton>
                  </ScrollTrack>
                </TreeScroll>
                <ScrollTrack>
                  <ScrollButton aria-label="向左"><Chevron dir="left" /></ScrollButton>
                  <ScrollThumb $size={109} />
                  <ScrollSpace $size={83} />
                  <ScrollButton aria-label="向右"><Chevron dir="right" /></ScrollButton>
                  <ToggleSlot />
                </ScrollTrack>
              </TreeFrame>
              <RadioRow>
                <RadioLabel><Radio type="radio" name="scope" />标准</RadioLabel>
                <RadioLabel><Radio type="radio" name="scope" />补充</RadioLabel>
                <RadioLabel><Radio type="radio" name="scope" defaultChecked />全部</RadioLabel>
              </RadioRow>
            </QueryPage>
          </QueryPane>
          <GridFrame $open>
            <QuotaGrid />
          </GridFrame>
        </DialogBody>
      </Dialog>
    </>
  );
};

const App = () => {
  const [tab, setTab] = useState('分部分项');

  return (
    <Window>
      <GlobalStyle />
      <TopBars />
      <Workspace>
        <LeftPane>
          <LeftTabs>
            <LeftTab $on>项目结构</LeftTab>
            <LeftTab>查询</LeftTab>
          </LeftTabs>
          <LeftPage>
            <LeftHeading>分部分项</LeftHeading>
            <ProjectTree>
              <ProjectNode>整个项目</ProjectNode>
            </ProjectTree>
          </LeftPage>
        </LeftPane>
        <Divider>
          <DividerHandle />
        </Divider>
        <Main>
          <MainTabs>
            {mainTabs.map((name) => (
              <MainTab key={name} $on={name === tab} onClick={() => setTab(name)}>{name}</MainTab>
            ))}
          </MainTabs>
          <Actions />
          <GridFrame>
            <ItemGrid />
            <ScrollSpace $size={1} />
            <ScrollTrack>
              <ScrollButton aria-label="向左"><Chevron dir="left" /></ScrollButton>
              <ScrollThumb $size={22} />
              <ScrollSpace $size={1598} />
            </ScrollTrack>
          </GridFrame>
          <BottomArea>
            <DetailPane>
              <DetailTabs>
                <SegmentTabOn>工料机显示</SegmentTabOn>
                <SegmentLine $gap={6} />
                <SegmentTab>查看单价构成</SegmentTab>
                <SegmentLine />
                <SegmentTab>标准换算</SegmentTab>
                <SegmentLine />
                <SegmentTab>换算信息</SegmentTab>
                <SegmentLine />
                <SegmentTab>特征及内容</SegmentTab>
              </DetailTabs>
              <GridFrame $open>
                <ResourceGrid />
              </GridFrame>
            </DetailPane>
            <SidePanel>
              <ButtonGrid>
                <PushButton>插入</PushButton>
                <PushButton>添加</PushButton>
                <PushButton>删除</PushButton>
                <PushButton>查询</PushButton>
                <PushButton $full>补充</PushButton>
                <PushButton $full>材料价格查询</PushButton>
              </ButtonGrid>
              <FilterBox>
                <legend>筛选条件</legend>
                {['人工', '机械', '材料', '主材', '设备', '所有'].map((name) => (
                  <RadioLabel key={name}><Radio type="radio" name="filter" />{name}</RadioLabel>
                ))}
              </FilterBox>
            </SidePanel>
          </BottomArea>
        </Main>
      </Workspace>
      <QueryDialog />
    </Window>
  );
};

export default App;
